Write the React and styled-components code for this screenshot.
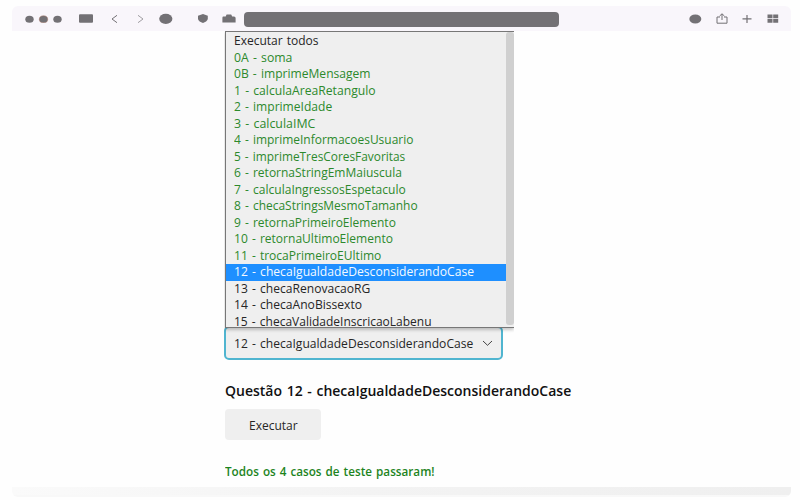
import React from "react";
import styled, { createGlobalStyle } from "styled-components";

const GlobalStyle = createGlobalStyle`
  * { box-sizing: border-box; }
  body { margin: 0; background: #fefefe; font-family: "Open Sans", "Noto Sans", sans-serif; }
`;

const Page = styled.div`
  width: 800px;
  height: 500px;
  padding: 6px 9px 3px 12px;
  overflow: hidden;
`;
const Window = styled.div`
  height: 491px;
  display: flex;
  flex-direction: column;
  border-radius: 6px;
  overflow: hidden;
  background: #fefefe;
`;
const Toolbar = styled.header`
  flex: none;
  height: 25px;
  display: flex;
  align-items: center;
  background: #f9f6fb;
  color: #737175;
`;
const Icon = styled.svg`
  display: block;
  flex: none;
  margin-left: ${(p) => p.$gap}px;
  fill: ${(p) => (p.$line ? "none" : "currentColor")};
  stroke: ${(p) => (p.$line ? "currentColor" : "none")};
`;
const Address = styled.div`
  flex: none;
  width: 315px;
  height: 15px;
  margin-left: 8px;
  border-radius: 4px;
  background: #737175;
  margin-top: 1px;
`;
const Content = styled.main`
  flex: 1;
  padding-left: 212px;
  display: flex;
  flex-direction: column;
  align-items: flex-start;
`;
const Menu = styled.div`
  flex: none;
  position: relative;
  z-index: 1;
  width: 289px;
  height: 297px;
  margin-left: 1px;
  display: flex;
  border: solid #777;
  border-width: 1px 0 1px 1px;
  background: #efefef;
  box-shadow: 0 2px 3px rgba(0, 0, 0, 0.22);
  clip-path: inset(0 0 -5px -1px);
`;
const Options = styled.ul`
  width: 280px;
  margin: 0;
  padding: 1px 0 0;
  list-style: none;
  overflow: hidden;
`;
const Label = styled.span`
  display: inline-block;
  white-space: pre;
  word-spacing: 1px;
  transform: scaleX(${(p) => p.$stretch || 1});
  transform-origin: left;
`;
const COLORS = { idle: "#262626", done: "#2c892c", active: "#f4faff" };
const Option = styled.li`
  height: 16.53px;
  padding-left: 8px;
  font-size: 12px;
  line-height: 16.5px;
  color: ${(p) => COLORS[p.$state]};
  background: ${(p) => (p.$state === "active" ? "#1e8fff" : "transparent")};
`;
const Scrollbar = styled.div`
  width: 8px;
  height: 293px;
  border-radius: 3px;
  background: #d0d0d0;
`;
const Select = styled.div`
  width: 279px;
  height: 34px;
  margin-top: -2px;
  display: flex;
  align-items: center;
  justify-content: space-between;
  padding: 0 8px 0 7.5px;
  border: 2px solid #50b5d0;
  border-radius: 5px;
  background: #efefef;
  color: #262626;
  font-size: 12px;
`;
const Title = styled.h1`
  margin: 22px 0 0 1px;
  font-size: 14px;
  line-height: 18px;
  font-weight: 600;
  color: #111;
`;
const Button = styled.button`
  width: 96px;
  height: 31px;
  margin: 9px 0 0 1px;
  padding: 2px 0 0 24px;
  text-align: left;
  border: 0;
  border-radius: 4px;
  background: #efefef;
  color: #262626;
  font: 12px "Open Sans", sans-serif;
`;
const Result = styled.p`
  margin: 23px 0 0 1px;
  font-size: 12px;
  line-height: 17px;
  font-weight: 600;
  color: #1d841d;
`;
const Footer = styled.footer`
  flex: none;
  height: 10px;
  border-bottom: 2px solid #f8f8f8;
  background: linear-gradient(90deg, #fafafa, #f3f3f3 45%, #efefef);
`;

const OPTIONS = [
  ["Executar todos", "idle", 1],
  ["0A - soma", "done", 1.02],
  ["0B - imprimeMensagem", "done", 1.007],
  ["1 - calculaAreaRetangulo", "done", 1.014],
  ["2 - imprimeIdade", "done", 1.005],
  ["3 - calculaIMC", "done", 1.03],
  ["4 - imprimeInformacoesUsuario", "done", 0.997],
  ["5 - imprimeTresCoresFavoritas", "done", 0.99],
  ["6 - retornaStringEmMaiuscula", "done", 1],
  ["7 - calculaIngressosEspetaculo", "done", 1.003],
  ["8 - checaStringsMesmoTamanho", "done", 0.997],
  ["9 - retornaPrimeiroElemento", "done", 0.997],
  ["10 - retornaUltimoElemento", "done", 1.003],
  ["11 - trocaPrimeiroEUltimo", "done", 1.003],
  ["12 - checaIgualdadeDesconsiderandoCase", "active", 1.01],
  ["13 - checaRenovacaoRG", "idle", 1.007],
  ["14 - checaAnoBissexto", "idle", 1.008],
  ["15 - checaValidadeInscricaoLabenu", "idle", 1],
];

export default function App() {
  return (
    <Page>
      <GlobalStyle />
      <Window>
        <Toolbar>
          <Icon $gap={13} width="37" height="8"><ellipse cx="4.5" cy="4.3" rx="4.2" ry="3.5" /><ellipse cx="18.5" cy="4.3" rx="4.2" ry="3.5" stroke="#a77767" strokeWidth=".5" /><ellipse cx="32.5" cy="4.3" rx="4.2" ry="3.5" /></Icon>
          <Icon $gap={17} width="14" height="9"><rect y=".3" width="14" height="8.4" rx="1" /></Icon>
          <Icon $gap={18} $line width="7" height="10"><path d="M6 1.3L1 5l5 3.7" /></Icon>
          <Icon $gap={19} $line width="7" height="10" opacity=".65"><path d="M1 1.3L6 5 1 8.7" /></Icon>
          <Icon $gap={15} width="14" height="11"><ellipse cx="6.8" cy="5.8" rx="6.6" ry="5.1" /></Icon>
          <Icon $gap={25} width="10" height="9"><path d="M0 1.7L5 0l4.8 1.7v3.4C9.5 7 7 8.3 5 9 2.5 8.3.3 7 0 5z" /></Icon>
          <Icon $gap={14} width="14" height="9"><path d="M1 2.4h2.7L4.6.5h4.6l1 1.9H12q1.6 0 1.6 1.6v4.6H.4V4q0-1.2.6-1.6z" /></Icon>
          <Address />
          <Icon $gap={130} width="13" height="11"><ellipse cx="6.3" cy="6" rx="6" ry="4.6" /></Icon>
          <Icon $gap={14} $line width="12" height="11"><path d="M4 4H1v6.2h10V4H8M6 7V.9M3.6 3L6 .8 8.4 3" /></Icon>
          <Icon $gap={14} $line width="10" height="9"><path d="M.5 4.8h9M5 1v8" strokeWidth="1.2" /></Icon>
          <Icon $gap={15} width="12" height="9"><path d="M.5.6h5v3.6h-5zM6.2.6h5v3.6h-5zM.5 5h5v3.7h-5zM6.2 5h5v3.7h-5z" /></Icon>
        </Toolbar>
        <Content>
          <Menu>
            <Options>
              {OPTIONS.map(([text, state, stretch]) => (
                <Option key={text} $state={state}><Label $stretch={stretch}>{text}</Label></Option>
              ))}
            </Options>
            <Scrollbar />
          </Menu>
          <Select>
            <Label $stretch={1.007}>12 - checaIgualdadeDesconsiderandoCase</Label>
            <Icon $gap={0} $line width="11" height="7"><path d="M1 1l4.5 4.3L10 1" strokeWidth=".85" /></Icon>
          </Select>
          <Title><Label>Questão 12 - checaIgualdadeDesconsiderandoCase</Label></Title>
          <Button><Label>Executar</Label></Button>
          <Result><Label $stretch={0.975}>Todos os 4 casos de teste passaram!</Label></Result>
        </Content>
        <Footer />
      </Window>
    </Page>
  );
}
